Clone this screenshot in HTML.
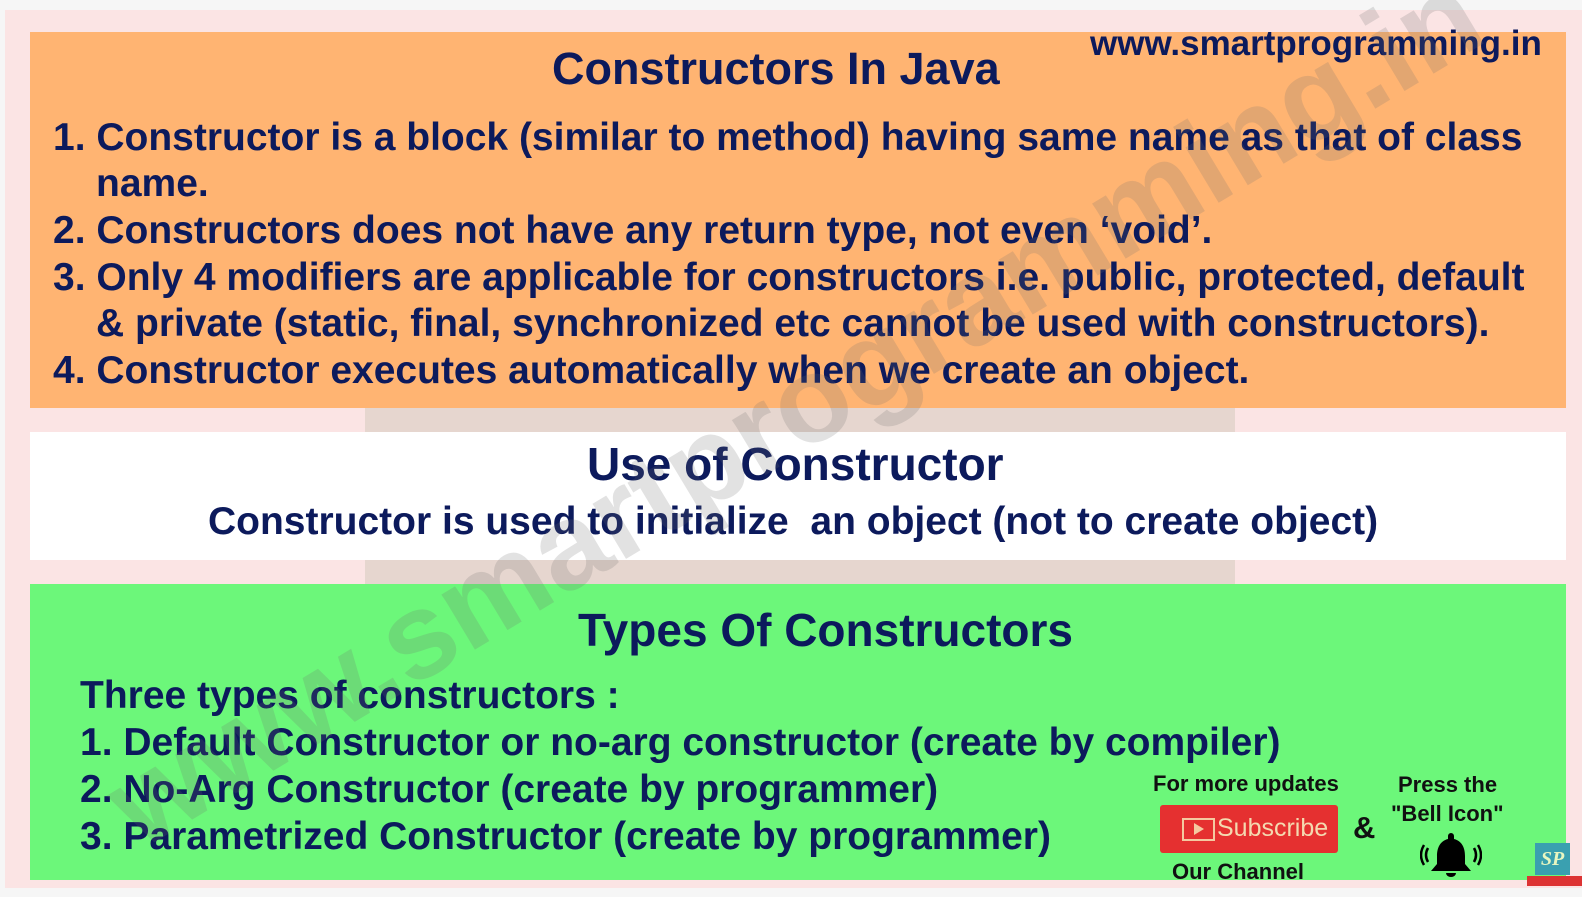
<!DOCTYPE html>
<html><head><meta charset="utf-8"><style>
*{margin:0;padding:0;box-sizing:border-box}
body{width:1582px;height:897px;overflow:hidden;background:#f6f6f6;font-family:"Liberation Sans",Arial,sans-serif;font-weight:bold;color:#0c1a5c;position:relative}
.frame{position:absolute;left:5px;top:10px;width:1577px;height:878px;background:#fbe4e4}
.mid{position:absolute;left:365px;top:408px;width:870px;height:176px;background:#e6d6cf}
.box{position:absolute;left:30px;width:1536px}
.or{top:32px;height:376px;background:#ffb472}
.wh{top:432px;height:128px;background:#fff}
.gr{top:584px;height:296px;background:#6cf77a}
.t{position:absolute;white-space:nowrap;line-height:1}
.l{font-size:39px}
.wm{position:absolute;left:150px;top:745px;font-size:122px;line-height:1;color:rgba(110,110,110,0.2);transform:rotate(-31deg);transform-origin:left bottom;white-space:nowrap}
.sm{font-size:22px;color:#111}
</style></head><body>
<div class="frame"></div>
<div class="mid"></div>
<div class="box or"></div>
<div class="box wh"></div>
<div class="box gr"></div>

<div class="t" style="left:552px;top:46px;font-size:45px">Constructors In Java</div>
<div class="t" style="left:1090px;top:26px;font-size:35px">www.smartprogramming.in</div>
<div class="t l" style="left:53px;top:118px">1. Constructor is a block (similar to method) having same name as that of class</div>
<div class="t l" style="left:96px;top:164px">name.</div>
<div class="t l" style="left:53px;top:211px">2. Constructors does not have any return type, not even ‘void’.</div>
<div class="t l" style="left:53px;top:258px">3. Only 4 modifiers are applicable for constructors i.e. public, protected, default</div>
<div class="t l" style="left:96px;top:304px">&amp; private (static, final, synchronized etc cannot be used with constructors).</div>
<div class="t l" style="left:53px;top:351px">4. Constructor executes automatically when we create an object.</div>

<div class="t" style="left:587px;top:441px;font-size:46px">Use of Constructor</div>
<div class="t l" style="left:208px;top:502px">Constructor is used to initialize&nbsp; an object (not to create object)</div>

<div class="t" style="left:578px;top:607px;font-size:46px">Types Of Constructors</div>
<div class="t l" style="left:80px;top:676px">Three types of constructors :</div>
<div class="t l" style="left:80px;top:723px">1. Default Constructor or no-arg constructor (create by compiler)</div>
<div class="t l" style="left:80px;top:770px">2. No-Arg Constructor (create by programmer)</div>
<div class="t l" style="left:80px;top:817px">3. Parametrized Constructor (create by programmer)</div>

<div class="wm">www.smartprogramming.in</div>

<div class="t sm" style="left:1153px;top:773px">For more updates</div>
<div style="position:absolute;left:1160px;top:805px;width:178px;height:48px;background:#e53030;border-radius:3px"></div>
<div style="position:absolute;left:1182px;top:818px;width:33px;height:23px;background:#e53030;border:2px solid #f4c9a0"></div>
<div style="position:absolute;left:1194px;top:823px;width:0;height:0;border-left:10px solid #f4c9a0;border-top:6px solid transparent;border-bottom:6px solid transparent"></div>
<div class="t" style="left:1217px;top:816px;font-size:25px;font-weight:normal;color:#f4d9b0">Subscribe</div>
<div class="t" style="left:1353px;top:812px;font-size:31px;color:#111">&amp;</div>
<div class="t sm" style="left:1172px;top:861px">Our Channel</div>
<div class="t sm" style="left:1398px;top:774px">Press the</div>
<div class="t sm" style="left:1391px;top:803px">"Bell Icon"</div>
<svg style="position:absolute;left:1420px;top:830px" width="62" height="50" viewBox="0 0 62 50">
<path d="M31 3a3 3 0 0 1 3 3v3c8 2 11 9 11 17v8l6 7H11l6-7v-8c0-8 3-15 11-17V6a3 3 0 0 1 3-3z" fill="#000"/>
<path d="M26 43h10a5 4 0 0 1-10 0z" fill="#000"/>
<path d="M8 18q-4 7 0 14M4 15q-6 10 0 20M54 18q4 7 0 14M58 15q6 10 0 20" stroke="#000" stroke-width="2.5" fill="none"/>
</svg>
<div style="position:absolute;left:1535px;top:843px;width:35px;height:32px;background:#3aa0b0;color:#e8f6c0;font:italic bold 20px 'Liberation Serif',serif;text-align:center;line-height:32px">SP</div>
<div style="position:absolute;left:1527px;top:876px;width:55px;height:10px;background:#d33"></div>
</body></html>
